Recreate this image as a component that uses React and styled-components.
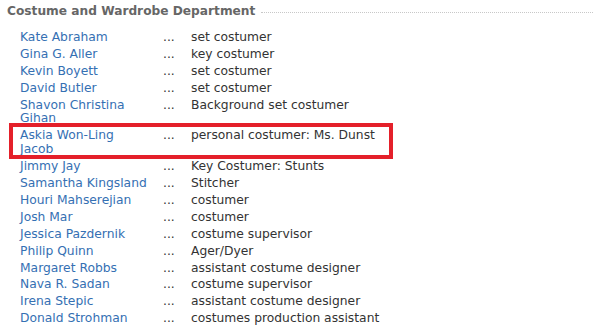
import React from "react";
import styled, { createGlobalStyle } from "styled-components";

const GlobalStyle = createGlobalStyle`
  html, body {
    margin: 0;
    padding: 0;
    background: #fff;
  }
  body {
    font-family: "DejaVu Sans", Verdana, sans-serif;
  }
`;

const Page = styled.div`
  padding: 2px 7px 0 7px;
  width: 586px;
`;

const SectionHeader = styled.div`
  display: flex;
  align-items: center;
  gap: 6px;
  height: 17px;
`;

const SectionTitle = styled.h4`
  margin: 0;
  font-size: 12.2px;
  font-weight: bold;
  color: #666;
  white-space: nowrap;
`;

const Rule = styled.div`
  flex: 1;
  border-top: 1px dotted #c8c8c8;
  margin-top: 3px;
`;

const CreditList = styled.div`
  display: flex;
  flex-direction: column;
  padding: 10px 0 0 13px;
`;

const CreditRow = styled.div`
  position: relative;
  display: grid;
  grid-template-columns: 143px 28px 1fr;
  font-size: 12.3px;
  line-height: 13.6px;
  padding: 1.7px 0;

  ${({ $highlighted }) =>
    $highlighted &&
    `
    &::after {
      content: "";
      position: absolute;
      left: -11px;
      top: -4px;
      width: 376px;
      height: 28px;
      border: 4px solid #e4202a;
      pointer-events: none;
    }
  `}
`;

const Name = styled.a`
  color: #3570b3;
  text-decoration: none;
  padding-right: 15px;
`;

const Dots = styled.span`
  color: #333;
`;

const Role = styled.span`
  color: #333;
`;

const crew = [
  ["Kate Abraham", "set costumer"],
  ["Gina G. Aller", "key costumer"],
  ["Kevin Boyett", "set costumer"],
  ["David Butler", "set costumer"],
  ["Shavon Christina Gihan", "Background set costumer"],
  ["Askia Won-Ling Jacob", "personal costumer: Ms. Dunst", true],
  ["Jimmy Jay", "Key Costumer: Stunts"],
  ["Samantha Kingsland", "Stitcher"],
  ["Houri Mahserejian", "costumer"],
  ["Josh Mar", "costumer"],
  ["Jessica Pazdernik", "costume supervisor"],
  ["Philip Quinn", "Ager/Dyer"],
  ["Margaret Robbs", "assistant costume designer"],
  ["Nava R. Sadan", "costume supervisor"],
  ["Irena Stepic", "assistant costume designer"],
  ["Donald Strohman", "costumes production assistant"],
];

export default function App() {
  return (
    <>
      <GlobalStyle />
      <Page>
        <SectionHeader>
          <SectionTitle>Costume and Wardrobe Department</SectionTitle>
          <Rule />
        </SectionHeader>
        <CreditList>
          {crew.map(([name, role, hl]) => (
            <CreditRow key={name} $highlighted={hl}>
              <Name href="#">{name}</Name>
              <Dots>...</Dots>
              <Role>{role}</Role>
            </CreditRow>
          ))}
        </CreditList>
      </Page>
    </>
  );
}
